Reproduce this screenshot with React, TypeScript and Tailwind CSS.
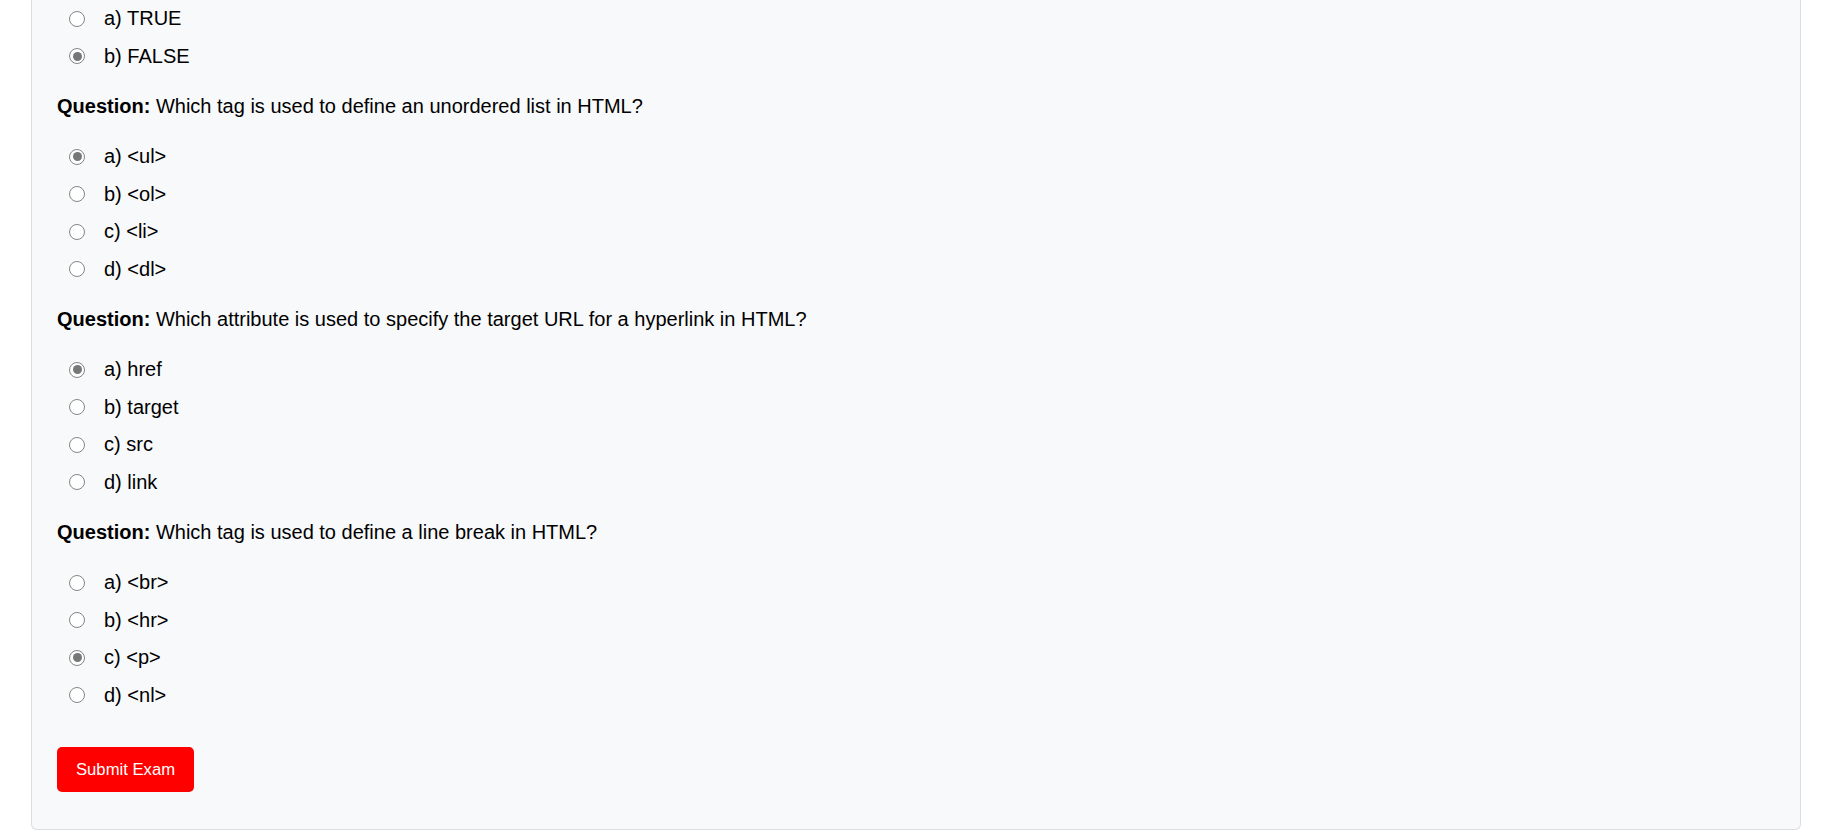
import React from "react";

type Q = { text?: string; options: string[]; selected: number };

const questions: Q[] = [
  { options: ["a) TRUE", "b) FALSE"], selected: 1 },
  {
    text: "Which tag is used to define an unordered list in HTML?",
    options: ["a) <ul>", "b) <ol>", "c) <li>", "d) <dl>"],
    selected: 0,
  },
  {
    text: "Which attribute is used to specify the target URL for a hyperlink in HTML?",
    options: ["a) href", "b) target", "c) src", "d) link"],
    selected: 0,
  },
  {
    text: "Which tag is used to define a line break in HTML?",
    options: ["a) <br>", "b) <hr>", "c) <p>", "d) <nl>"],
    selected: 2,
  },
];

const Radio = ({ checked }: { checked: boolean }) => (
  <span className="flex h-[16px] w-[16px] shrink-0 items-center justify-center rounded-full border-[1.5px] border-[#858585] bg-white">
    {checked && <span className="h-[9px] w-[9px] rounded-full bg-[#777777]" />}
  </span>
);

const Question = ({ q }: { q: Q }) => (
  <div className="flex flex-col">
    {q.text && (
      <p className="my-5 leading-[23px]">
        <b className="font-bold">Question:</b> {q.text}
      </p>
    )}
    {q.options.map((opt, i) => (
      <label key={opt} className="flex h-[37.5px] items-center pl-[12px]">
        <Radio checked={i === q.selected} />
        <span className="ml-[19px] leading-[23px]">{opt}</span>
      </label>
    ))}
  </div>
);

const App = () => {
  return (
    <div className="h-[837px] overflow-hidden bg-white pl-[31px] pr-[25px] text-[20px] text-black [font-family:'Liberation_Sans',Arial,sans-serif]">
      <div className="rounded-b-[6px] border-x border-b border-[#dcdde0] bg-[#f8f9fa] pb-[37px] pl-[25px] pr-6">
        {questions.map((q, i) => (
          <Question key={i} q={q} />
        ))}
        <button className="mt-[33px] h-[45px] rounded-[5px] bg-[#ff0000] px-[19px] text-[16.67px] text-white">
          Submit Exam
        </button>
      </div>
    </div>
  );
};

export default App;
